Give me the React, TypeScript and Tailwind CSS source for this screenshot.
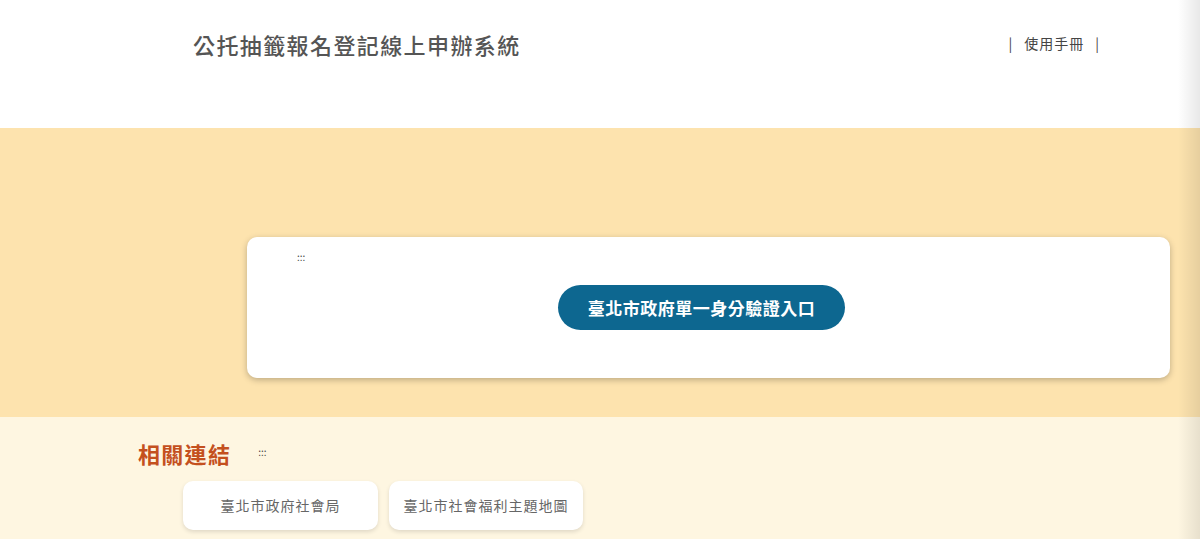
const font = "font-['Noto_Sans_CJK_TC','Noto_Sans',sans-serif]";

export default function App() {
  return (
    <div className={`relative min-h-[539px] w-full overflow-hidden bg-[#fef6e1] ${font}`}>
      <header className="flex h-[128px] items-start justify-between bg-white pl-[193px] pr-[100px] pt-[29px]">
        <h1 className="text-[22px] font-medium leading-[30px] tracking-[1.4px] text-[#555]">
          公托抽籤報名登記線上申辦系統
        </h1>
        <nav className="flex items-center gap-[11px] pt-[1px] text-[14px] leading-[26px] tracking-[1px] text-[#444]">
          <span>|</span>
          <a href="#">使用手冊</a>
          <span>|</span>
        </nav>
      </header>

      <section className="flex h-[289px] bg-[#fde3ae] pl-[247px] pr-[30px] pt-[109px]">
        <div className="flex h-[141px] w-[923px] flex-col rounded-[10px] bg-white shadow-[0_2px_6px_rgba(0,0,0,0.25)]">
          <span className="pl-[50px] pt-[13px] text-[10px] leading-[14px] text-[#444]">:::</span>
          <div className="flex justify-center pr-[14px] pt-[21px]">
            <button className="h-[45px] w-[287px] rounded-full bg-[#0d6790] text-[17px] font-bold tracking-[0.5px] text-white">
              臺北市政府單一身分驗證入口
            </button>
          </div>
        </div>
      </section>

      <section className="pl-[138px] pt-[21px]">
        <div className="flex items-center gap-[27px]">
          <h2 className="text-[22px] font-bold leading-[30px] tracking-[1.3px] text-[#c4501e]">相關連結</h2>
          <span className="-mt-[4px] text-[10px] text-[#444]">:::</span>
        </div>
        <div className="flex gap-[11px] pl-[45px] pt-[13px]">
          <a href="#" className="flex h-[49px] w-[195px] items-center justify-center rounded-[10px] bg-white text-[14px] tracking-[1px] text-[#666] shadow-[0_2px_4px_rgba(0,0,0,0.12)]">
            臺北市政府社會局
          </a>
          <a href="#" className="flex h-[49px] w-[194px] items-center justify-center rounded-[10px] bg-white text-[14px] tracking-[1px] text-[#666] shadow-[0_2px_4px_rgba(0,0,0,0.12)]">
            臺北市社會福利主題地圖
          </a>
        </div>
      </section>

      <div className="pointer-events-none absolute right-0 top-0 h-full w-[22px] bg-gradient-to-r from-transparent to-[rgba(0,0,0,0.09)]" />
    </div>
  );
}
